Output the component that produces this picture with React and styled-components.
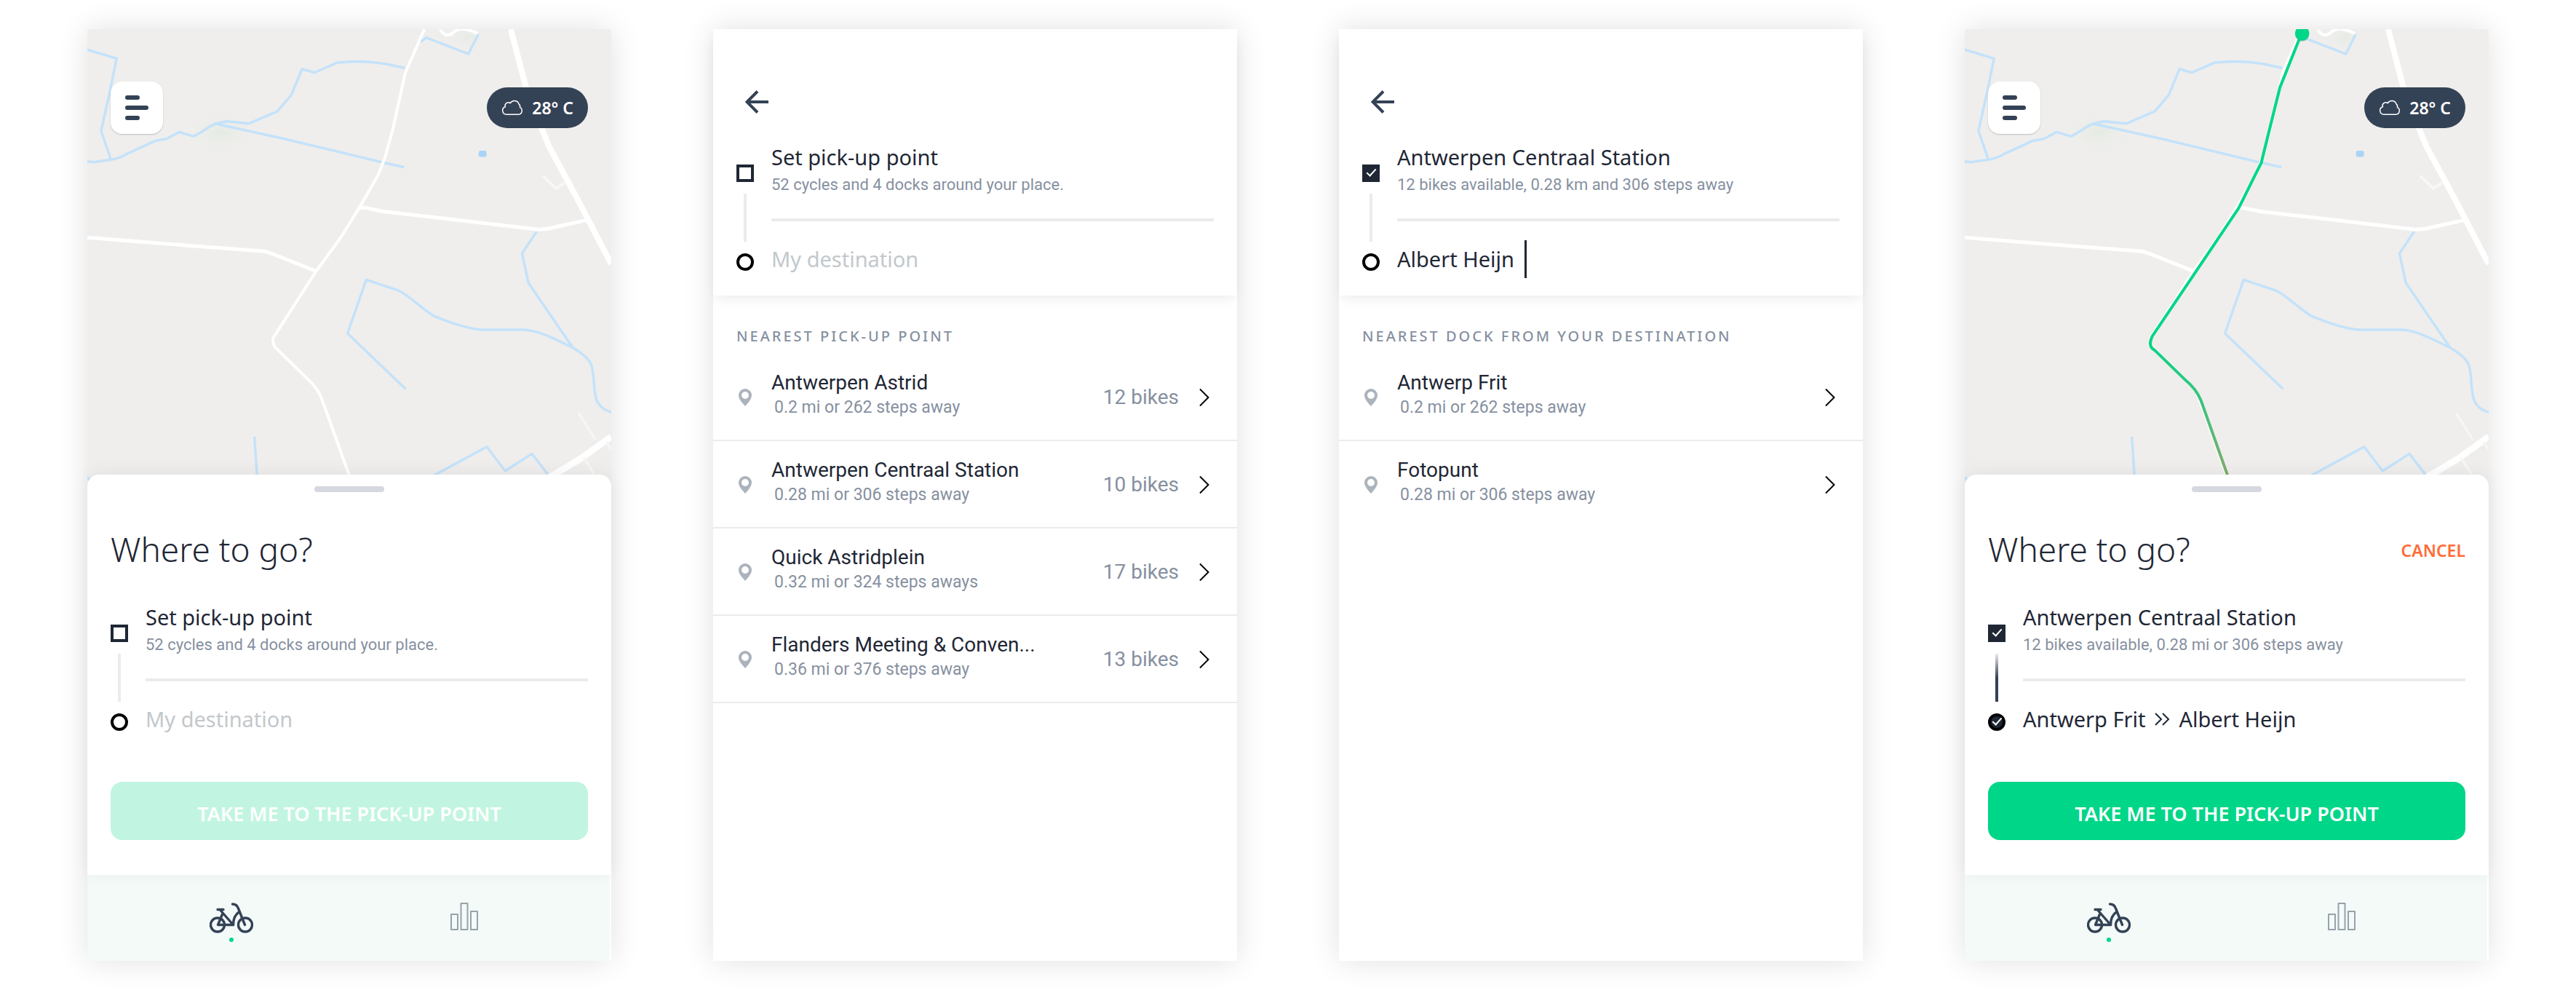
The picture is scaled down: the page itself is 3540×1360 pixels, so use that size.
import React from "react";
import styled, { createGlobalStyle, css } from "styled-components";

const color = {
  ink: "#1f2735",
  slate: "#344256",
  muted: "#8690a0",
  faint: "#c2c8cc",
  pin: "#abb3bc",
  line: "#ebebed",
  green: "#00d688",
  orange: "#ff6c37",
  map: "#efeeec",
  water: "#c4e2fa",
};

const ui = `"Noto Sans", "Open Sans", sans-serif`;
const body = `Roboto, "Liberation Sans", sans-serif`;

const GlobalStyle = createGlobalStyle`
  *, *::before, *::after { box-sizing: border-box; }
  body { margin: 0; background: #fff; color: ${color.ink}; font-family: ${ui}; }
  h1, h2, p, ul { margin: 0; padding: 0; }
  ul { list-style: none; }
  button, input { font: inherit; color: inherit; }
  button { border: 0; padding: 0; background: none; cursor: pointer; }
  svg { display: block; }
`;

const Board = styled.main`
  display: grid;
  grid-template-columns: repeat(auto-fit, minmax(640px, 1fr));
  gap: 140px;
  padding: 40px 120px;
`;

const Screen = styled.section`
  position: relative;
  display: flex;
  flex-direction: column;
  min-height: 1280px;
  background: #fff;
  box-shadow: 0 0 40px rgba(0, 0, 0, 0.12);
`;

/* ---------- map ---------- */

const MapArea = styled.div`
  position: relative;
  display: flex;
  flex: 1;
  justify-content: space-between;
  align-items: flex-start;
  padding: 72px 32px 0;
`;

const MapCanvas = styled.svg`
  position: absolute;
  inset: 0;
  width: 100%;
  height: 100%;
  background: ${color.map};
  path { vector-effect: non-scaling-stroke; fill: none; }
`;

const MenuButton = styled.button`
  position: relative;
  display: flex;
  flex-direction: column;
  justify-content: center;
  gap: 8px;
  width: 72px;
  height: 72px;
  padding-left: 20px;
  border-radius: 16px;
  background: #fff;
  box-shadow: 0 1px 2px rgba(0, 0, 0, 0.2);
`;

const MenuBar = styled.span`
  width: ${(p) => (p.$long ? 32 : 20)}px;
  height: 6px;
  border-radius: 3px;
  background: ${color.slate};
`;

const Weather = styled.p`
  position: relative;
  display: flex;
  align-items: center;
  gap: 12px;
  height: 56px;
  margin-top: 8px;
  padding: 0 20px;
  border-radius: 28px;
  background: ${color.slate};
  color: #fff;
  font-size: 23px;
  font-weight: 600;
`;

/* ---------- bottom sheet ---------- */

const Sheet = styled.div`
  position: relative;
  margin-top: -16px;
  padding: 16px 32px 48px;
  border-radius: 16px 16px 0 0;
  background: #fff;
  box-shadow: 0 -2px 24px rgba(0, 0, 0, 0.06);
`;

const Handle = styled.div`
  width: 96px;
  height: 8px;
  margin: 0 auto 46px;
  border-radius: 4px;
  background: #d5d8de;
`;

const SheetHeader = styled.header`
  display: flex;
  justify-content: space-between;
  align-items: center;
  margin-bottom: 42px;
`;

const Heading = styled.h1`
  font-size: 46px;
  font-weight: 300;
  line-height: 64px;
`;

const CancelButton = styled.button`
  padding-top: 4px;
  color: ${color.orange};
  font-size: 23px;
  font-weight: 600;
  line-height: 32px;
`;

const PrimaryButton = styled.button`
  width: 100%;
  height: 80px;
  margin-top: 66px;
  padding-top: 6px;
  border-radius: 16px;
  background: ${color.green};
  color: #fff;
  font-size: 27px;
  font-weight: 600;
  &:disabled { background: #c2f5e1; }
`;

/* ---------- route picker ---------- */

const RoutePanel = styled.div`
  display: flex;
  gap: 24px;
`;

const Track = styled.div`
  display: flex;
  flex-direction: column;
  align-items: center;
  gap: 16px;
  padding-top: 30px;
`;

const Connector = styled.span`
  width: 4px;
  height: 66px;
  background: ${(p) =>
    p.$done ? `linear-gradient(#ebebed, ${color.slate} 50%)` : color.line};
`;

const Mark = styled.input`
  appearance: none;
  display: grid;
  place-items: center;
  width: 24px;
  height: 24px;
  margin: 0;
  border: 4px solid ${(p) => (p.$round ? "#000" : color.ink)};
  border-radius: ${(p) => (p.$round ? "50%" : "0")};
  &:checked { background: ${color.ink}; }
  &:checked::after {
    content: "";
    width: 7px;
    height: 13px;
    margin-top: -5px;
    border: solid #fff;
    border-width: 0 2px 2px 0;
    transform: rotate(42deg);
  }
`;

const Stops = styled.div`
  flex: 1;
  min-width: 0;
`;

const StopLabel = styled.label`
  display: block;
  font-size: 29px;
  line-height: 40px;
`;

const StopNote = styled.p`
  color: ${color.muted};
  font-family: ${body};
  font-size: 22px;
  line-height: 36px;
`;

const Destination = styled.div`
  display: flex;
  align-items: center;
  height: 76px;
  margin-top: 28px;
  padding-top: 32px;
  border-top: 4px solid ${color.line};
`;

const DestinationInput = styled.input`
  field-sizing: content;
  min-width: 100px;
  max-width: 100%;
  height: 40px;
  padding: 0;
  border: 0;
  outline: 0;
  background: none;
  font-size: 29px;
  line-height: 40px;
  &::placeholder { color: ${color.faint}; opacity: 1; }
`;

const Caret = styled.span`
  width: 3px;
  height: 52px;
  margin-left: 14px;
  background: ${color.ink};
`;

const Via = styled.label`
  display: flex;
  align-items: center;
  gap: 12px;
  font-size: 29px;
  line-height: 40px;
`;

/* ---------- search screens ---------- */

const SearchHeader = styled.header`
  padding: 84px 32px 30px;
  box-shadow: 0 8px 16px -4px rgba(0, 0, 0, 0.08);
`;

const BackButton = styled.button`
  display: block;
  margin: 0 0 40px 12px;
`;

const ListTitle = styled.h2`
  padding: 42px 32px 10px;
  color: ${color.muted};
  font-size: 20px;
  font-weight: 500;
  letter-spacing: 3px;
  line-height: 28px;
  text-transform: uppercase;
`;

const Places = styled.ul`
  display: flex;
  flex-direction: column;
`;

const PlaceRow = styled.button`
  display: flex;
  align-items: center;
  width: 100%;
  height: 120px;
  padding: 22px 38px 20px 34px;
  border-bottom: 2px solid ${(p) => (p.$open ? "transparent" : color.line)};
  text-align: left;
  font-family: ${body};
`;

const PlaceText = styled.span`
  display: flex;
  flex: 1;
  flex-direction: column;
  min-width: 0;
  padding: 0 24px 8px 26px;
`;

const PlaceName = styled.span`
  max-width: 364px;
  overflow: hidden;
  font-size: 28px;
  line-height: 36px;
  text-overflow: ellipsis;
  white-space: nowrap;
`;

const PlaceNote = styled.span`
  padding-left: 4px;
  color: ${color.muted};
  font-size: 23px;
  line-height: 32px;
`;

const BikeCount = styled.span`
  margin-right: 28px;
  color: ${color.muted};
  font-size: 28px;
  line-height: 36px;
`;

/* ---------- tab bar ---------- */

const TabBar = styled.nav`
  display: flex;
  height: 118px;
  margin-right: 2px;
  padding: 0 40px 0 38px;
  background: #f3faf8;
`;

const Tab = styled.button`
  display: flex;
  flex: 1;
  flex-direction: column;
  align-items: center;
  gap: 6px;
  padding-top: 38px;
  ${(p) =>
    p.$active &&
    css`
      &::after {
        content: "";
        width: 6px;
        height: 6px;
        border-radius: 50%;
        background: ${color.green};
      }
    `}
`;

/* ---------- drawings ---------- */

const CloudIcon = () => (
  <svg width="30" height="22" viewBox="0 0 30 22" fill="none" stroke="#fff" strokeWidth="1.5" aria-hidden="true">
    <path d="M7 20.2h16.5a5.2 5.2 0 0 0 2-9.8 4 4 0 0 0-1.3-4.2A6.600 6.600 0 0 0 12.200 4.700 4.500 4.500 0 0 0 5.300 9.700 5.400 5.400 0 0 0 7 20.200z" />
  </svg>
);

const ArrowIcon = () => (
  <svg width="32" height="32" viewBox="0 0 32 32" fill="none" stroke={color.slate} strokeWidth="4" aria-hidden="true">
    <path d="M32 16H3M17 1.500 2.500 16 17 30.500" />
  </svg>
);

const PinIcon = () => (
  <svg width="20" height="24" viewBox="0 0 20 24" aria-hidden="true">
    <path
      fill={color.pin}
      fillRule="evenodd"
      d="M10 0a9 9 0 0 1 9 9c0 5.500-5.500 11-9 15C6.500 20 1 14.500 1 9a9 9 0 0 1 9-9zm0 4a5 5 0 1 0 0 10 5 5 0 0 0 0-10z"
    />
  </svg>
);

const ChevronIcon = () => (
  <svg width="14" height="24" viewBox="0 0 14 24" fill="none" stroke="#000" strokeWidth="2" aria-hidden="true">
    <path d="M1 .5 12.500 12 1 23.500" />
  </svg>
);

const DoubleChevronIcon = () => (
  <svg width="22" height="18" viewBox="0 0 22 18" fill="none" stroke={color.ink} strokeWidth="2" aria-hidden="true">
    <path d="M2 1l8 8-8 8M12 1l8 8-8 8" />
  </svg>
);

const BikeIcon = () => (
  <svg width="60" height="42" viewBox="0 0 60 42" fill="none" stroke={color.slate} strokeWidth="3.400" strokeLinecap="round" strokeLinejoin="round" aria-hidden="true">
    <circle cx="11" cy="30.500" r="9.500" />
    <circle cx="49" cy="30.500" r="9.500" />
    <path d="M31.500 2c4.500 0 6.800 2.300 8 6l9 22.500" />
    <path d="M11 9.500h8M14.500 10l18 20.500H11.500l6-14.500" />
    <path d="M32.500 30.500c0-9.500 3-14.500 8.500-18" />
  </svg>
);

const ChartIcon = () => (
  <svg width="38" height="38" viewBox="0 0 38 38" fill="none" stroke="#98a2ab" strokeWidth="2" strokeLinejoin="round" aria-hidden="true">
    <path d="M1 16h9v21H1zM14.500 1h9v36h-9zM28 12h9v25h-9z" />
  </svg>
);

const ROUTE =
  "M990 80 935 238 882 484 818 632 573 1050Q559 1084 580 1096L664 1190Q698 1222 711 1260L790 1516";

function TownMap({ id, route }) {
  return (
    <MapCanvas viewBox="41 48 1486 1492" preserveAspectRatio="none" aria-label="Map" role="img">
      <defs>
        <radialGradient id={`${id}-park`}>
          <stop offset="0" stopColor="#e4ebe3" />
          <stop offset="1" stopColor={color.map} stopOpacity="0" />
        </radialGradient>
        <linearGradient id={`${id}-route`} gradientUnits="userSpaceOnUse" x1="0" y1="1050" x2="0" y2="1540">
          <stop offset="0" stopColor={color.green} />
          <stop offset="1" stopColor="#8aa96c" />
        </linearGradient>
      </defs>
      <ellipse cx="420" cy="385" rx="110" ry="70" fill={`url(#${id}-park)`} />
      <ellipse cx="1120" cy="75" rx="50" ry="45" fill={`url(#${id}-park)`} />
      <g stroke={color.water} strokeWidth="3.500" strokeLinejoin="round">
        <path d="M41 115 124 144 103 262 80 380 108 474" />
        <path d="M41 480 60 482 108 474Q130 470 150 457L235 412 265 406 302 384 342 398Q370 382 385 368L405 357 436 349 500 356 580 316 620 262 650 178 685 190 748 158Q820 148 890 162L942 175" />
        <path d="M405 357 600 406 875 482 940 499" />
        <path d="M985 90 1003 76 1122 129 1150 64" />
        <path d="M1316 708 1274 780 1292 876 1418 1088" />
        <path d="M944 1223 779 1041 832 866 925 902C960 922 990 962 1025 985 1080 1010 1120 1026 1160 1029H1280C1330 1033 1375 1065 1418 1088 1450 1110 1472 1130 1474 1162 1480 1195 1476 1250 1492 1272Q1505 1292 1527 1298" />
        <path d="M515 1378 522 1500 535 1540" />
        <path d="M1020 1507 1174 1411 1226 1490 1302 1434 1360 1520" />
        <path d="M41 1510 60 1540" />
      </g>
      <rect x="1151" y="445" width="22" height="20" rx="5" fill="#a9d4f7" />
      <g stroke="#fff" strokeLinejoin="round">
        <path strokeWidth="4" d="M997 48 943 190 908 372 886 465 866 524 818 620 760 728 690 838 568 1056Q566 1072 572 1084L680 1206Q702 1236 708 1262L722 1306 785 1508" />
        <path strokeWidth="5" d="M808 632 828 631 880 643 1100 672 1320 702 1345 700 1455 672" />
        <path strokeWidth="5" d="M41 728 300 752 545 773 565 781 690 838" />
        <path strokeWidth="8" d="M1242 48 1260 128 1290 260 1350 430 1430 600 1527 815" />
        <path strokeWidth="4" d="M1042 50Q1060 80 1080 58T1148 62" />
        <path strokeWidth="4" stroke="#f9f6f3" d="M1332 526 1370 568 1395 550" />
        <path strokeWidth="9" d="M1527 1378 1440 1450 1350 1512" />
        <path strokeWidth="3" stroke="#f9f6f3" d="M1434 1300 1482 1388M1448 1445 1478 1500M1512 1395 1527 1420" />
      </g>
      {route && (
        <>
          <path d={ROUTE} stroke={`url(#${id}-route)`} strokeWidth="4" strokeLinejoin="round" />
          <ellipse cx="998" cy="64" rx="20" ry="24" fill="#8b8b8b" opacity=".5" />
          <ellipse cx="998" cy="62" rx="20" ry="24" fill={color.green} />
        </>
      )}
    </MapCanvas>
  );
}

/* ---------- composed parts ---------- */

function Route({ id, title, note, picked, arrived, children }) {
  return (
    <RoutePanel>
      <Track>
        <Mark id={`${id}-from`} type="checkbox" checked={!!picked} readOnly />
        <Connector $done={arrived} />
        <Mark
          id={`${id}-to`}
          type="checkbox"
          $round
          checked={!!arrived}
          readOnly
          aria-label="Destination set"
        />
      </Track>
      <Stops>
        <StopLabel htmlFor={`${id}-from`}>{title}</StopLabel>
        <StopNote>{note}</StopNote>
        <Destination>{children}</Destination>
      </Stops>
    </RoutePanel>
  );
}

function MapScreen({ id, route, children }) {
  return (
    <Screen>
      <MapArea>
        <TownMap id={id} route={route} />
        <MenuButton aria-label="Menu">
          <MenuBar />
          <MenuBar $long />
          <MenuBar />
        </MenuButton>
        <Weather>
          <CloudIcon />
          28° C
        </Weather>
      </MapArea>
      <Sheet>
        <Handle />
        <SheetHeader>
          <Heading>Where to go?</Heading>
          {route && <CancelButton>CANCEL</CancelButton>}
        </SheetHeader>
        {children}
        <PrimaryButton disabled={!route}>TAKE ME TO THE PICK-UP POINT</PrimaryButton>
      </Sheet>
      <TabBar>
        <Tab $active aria-label="Ride">
          <BikeIcon />
        </Tab>
        <Tab aria-label="Statistics">
          <ChartIcon />
        </Tab>
      </TabBar>
    </Screen>
  );
}

function SearchScreen({ heading, places, openEnded, children }) {
  return (
    <Screen>
      <SearchHeader>
        <BackButton aria-label="Back">
          <ArrowIcon />
        </BackButton>
        {children}
      </SearchHeader>
      <ListTitle>{heading}</ListTitle>
      <Places>
        {places.map((place, i) => (
          <li key={place.name}>
            <PlaceRow $open={openEnded && i === places.length - 1}>
              <PinIcon />
              <PlaceText>
                <PlaceName>{place.name}</PlaceName>
                <PlaceNote>{place.note}</PlaceNote>
              </PlaceText>
              {place.bikes && <BikeCount>{place.bikes} bikes</BikeCount>}
              <ChevronIcon />
            </PlaceRow>
          </li>
        ))}
      </Places>
    </Screen>
  );
}

const pickups = [
  { name: "Antwerpen Astrid", note: "0.2 mi or 262 steps away", bikes: 12 },
  { name: "Antwerpen Centraal Station", note: "0.28 mi or 306 steps away", bikes: 10 },
  { name: "Quick Astridplein", note: "0.32 mi or 324 steps aways", bikes: 17 },
  { name: "Flanders Meeting & Conven...", note: "0.36 mi or 376 steps away", bikes: 13 },
];

const docks = [
  { name: "Antwerp Frit", note: "0.2 mi or 262 steps away" },
  { name: "Fotopunt", note: "0.28 mi or 306 steps away" },
];

export default function App() {
  return (
    <>
      <GlobalStyle />
      <Board>
        <MapScreen id="start">
          <Route id="start" title="Set pick-up point" note="52 cycles and 4 docks around your place.">
            <DestinationInput placeholder="My destination" aria-label="My destination" />
          </Route>
        </MapScreen>

        <SearchScreen heading="Nearest pick-up point" places={pickups}>
          <Route id="pickup" title="Set pick-up point" note="52 cycles and 4 docks around your place.">
            <DestinationInput placeholder="My destination" aria-label="My destination" />
          </Route>
        </SearchScreen>

        <SearchScreen heading="Nearest dock from your destination" places={docks} openEnded>
          <Route
            id="dock"
            title="Antwerpen Centraal Station"
            note="12 bikes available, 0.28 km and 306 steps away"
            picked
          >
            <DestinationInput defaultValue="Albert Heijn" aria-label="My destination" />
            <Caret />
          </Route>
        </SearchScreen>

        <MapScreen id="ready" route>
          <Route
            id="ready"
            title="Antwerpen Centraal Station"
            note="12 bikes available, 0.28 mi or 306 steps away"
            picked
            arrived
          >
            <Via htmlFor="ready-to">
              Antwerp Frit
              <DoubleChevronIcon />
              Albert Heijn
            </Via>
          </Route>
        </MapScreen>
      </Board>
    </>
  );
}
